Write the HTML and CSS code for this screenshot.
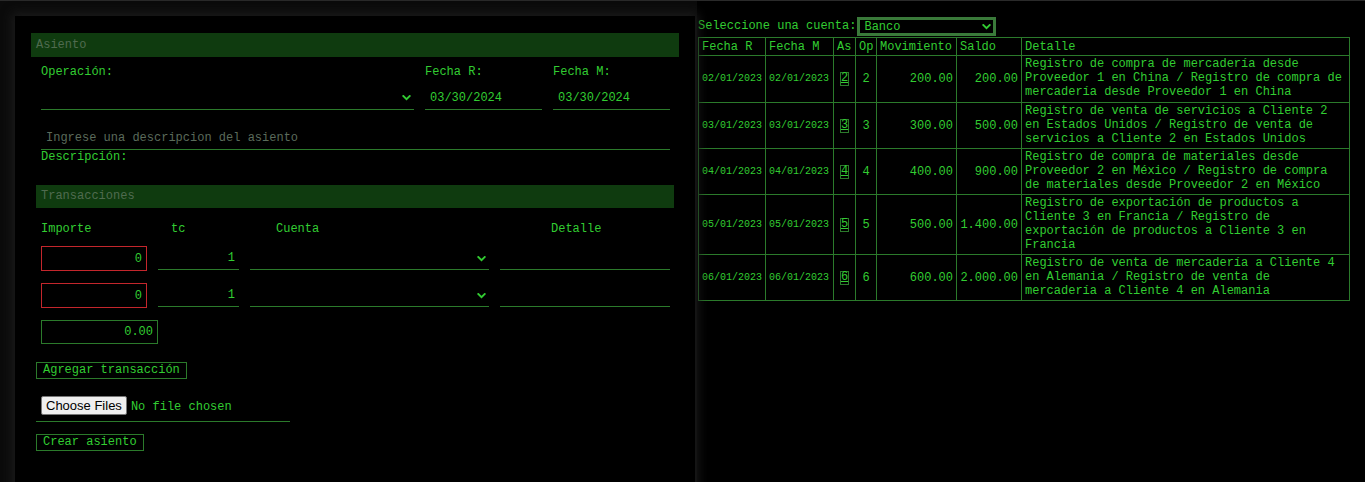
FILE: index.html
```html
<!DOCTYPE html>
<html lang="es">
<head>
<meta charset="utf-8">
<title>Asientos</title>
<link rel="stylesheet" href="styles.css">
</head>
<body>
<div class="app">
  <section class="panel">
    <div class="bar">Asiento</div>
    <div class="toprow">
      <div class="field f-op">
        <label class="lbl">Operación:</label>
        <div class="selwrap">
          <select class="line-select"><option></option></select>
          <svg class="chev" viewBox="0 0 10 7" width="9" height="6"><path d="M1.2 1.2 L5 5 L8.8 1.2" fill="none" stroke="#32cd32" stroke-width="2.2" stroke-linecap="square"/></svg>
        </div>
      </div>
      <div class="field f-date">
        <label class="lbl">Fecha R:</label>
        <input class="line-input" type="text" value="03/30/2024">
      </div>
      <div class="field f-date">
        <label class="lbl">Fecha M:</label>
        <input class="line-input" type="text" value="03/30/2024">
      </div>
    </div>
    <div class="desc">
      <input class="line-input desc-input" type="text" placeholder="Ingrese una descripcion del asiento">
      <label class="lbl">Descripción:</label>
    </div>

    <div class="bar bar2">Transacciones</div>
    <div class="trow thead">
      <div class="c-imp">Importe</div>
      <div class="c-tc h-tc">tc</div>
      <div class="c-cta h-cta">Cuenta</div>
      <div class="c-det h-det">Detalle</div>
    </div>
    <div class="trow r1">
      <input class="c-imp box-input red" type="text" value="0">
      <input class="c-tc line-input num" type="text" value="1">
      <div class="c-cta selwrap">
        <select class="line-select"><option></option></select>
        <svg class="chev" viewBox="0 0 10 7" width="9" height="6"><path d="M1.2 1.2 L5 5 L8.8 1.2" fill="none" stroke="#32cd32" stroke-width="2.2" stroke-linecap="square"/></svg>
      </div>
      <input class="c-det line-input" type="text">
    </div>
    <div class="trow r2">
      <input class="c-imp box-input red" type="text" value="0">
      <input class="c-tc line-input num" type="text" value="1">
      <div class="c-cta selwrap">
        <select class="line-select"><option></option></select>
        <svg class="chev" viewBox="0 0 10 7" width="9" height="6"><path d="M1.2 1.2 L5 5 L8.8 1.2" fill="none" stroke="#32cd32" stroke-width="2.2" stroke-linecap="square"/></svg>
      </div>
      <input class="c-det line-input" type="text">
    </div>
    <div class="totrow">
      <input class="box-input total" type="text" value="0.00">
    </div>
    <button class="gbtn add">Agregar transacción</button>
    <div class="filewrap">
      <input class="file" type="file" multiple>
    </div>
    <button class="gbtn create">Crear asiento</button>
  </section>

  <section class="right">
    <div class="selrow">
      <span class="sel-lbl">Seleccione una cuenta:</span>
      <div class="selwrap bancowrap">
        <select class="banco"><option>Banco</option></select>
        <svg class="chev chev-b" viewBox="0 0 10 7" width="9" height="6"><path d="M1.2 1.2 L5 5 L8.8 1.2" fill="none" stroke="#32cd32" stroke-width="2.2" stroke-linecap="square"/></svg>
      </div>
    </div>
    <table class="ledger">
      <colgroup>
        <col class="w-fr"><col class="w-fm"><col class="w-as"><col class="w-op"><col class="w-mov"><col class="w-sal"><col class="w-det">
      </colgroup>
      <thead>
        <tr><th>Fecha R</th><th>Fecha M</th><th>As</th><th>Op</th><th>Movimiento</th><th>Saldo</th><th>Detalle</th></tr>
      </thead>
      <tbody>
        <tr>
          <td class="date">02/01/2023</td><td class="date">02/01/2023</td>
          <td class="as"><span class="aslink">2</span></td><td class="op">2</td>
          <td class="num">200.00</td><td class="num">200.00</td>
          <td class="det first">Registro de compra de mercadería desde Proveedor 1 en China / Registro de compra de mercadería desde Proveedor 1 en China</td>
        </tr>
        <tr>
          <td class="date">03/01/2023</td><td class="date">03/01/2023</td>
          <td class="as"><span class="aslink">3</span></td><td class="op">3</td>
          <td class="num">300.00</td><td class="num">500.00</td>
          <td class="det">Registro de venta de servicios a Cliente 2 en Estados Unidos / Registro de venta de servicios a Cliente 2 en Estados Unidos</td>
        </tr>
        <tr>
          <td class="date">04/01/2023</td><td class="date">04/01/2023</td>
          <td class="as"><span class="aslink">4</span></td><td class="op">4</td>
          <td class="num">400.00</td><td class="num">900.00</td>
          <td class="det">Registro de compra de materiales desde Proveedor 2 en México / Registro de compra de materiales desde Proveedor 2 en México</td>
        </tr>
        <tr>
          <td class="date">05/01/2023</td><td class="date">05/01/2023</td>
          <td class="as"><span class="aslink">5</span></td><td class="op">5</td>
          <td class="num">500.00</td><td class="num">1.400.00</td>
          <td class="det">Registro de exportación de productos a Cliente 3 en Francia / Registro de exportación de productos a Cliente 3 en Francia</td>
        </tr>
        <tr>
          <td class="date">06/01/2023</td><td class="date">06/01/2023</td>
          <td class="as"><span class="aslink">6</span></td><td class="op">6</td>
          <td class="num">600.00</td><td class="num">2.000.00</td>
          <td class="det">Registro de venta de mercadería a Cliente 4 en Alemania / Registro de venta de mercadería a Cliente 4 en Alemania</td>
        </tr>
      </tbody>
    </table>
  </section>
</div>
</body>
</html>
```

FILE: styles.css
```css
* { box-sizing: border-box; }

html, body {
  margin: 0;
  padding: 0;
  height: 100%;
  background: #0b0b0b;
  overflow: hidden;
}

body {
  font-family: "Liberation Mono", "DejaVu Sans Mono", monospace;
  font-size: 12px;
  color: #32cd32;
}

.app {
  display: flex;
  align-items: flex-start;
  height: 482px;
  border-top: 1px solid #2a2a2a;
}

.panel {
  position: relative;
  z-index: 1;
  width: 680px;
  height: 482px;
  margin: 15px 0 0 15px;
  padding: 17px 16px 0 16px;
  background: #000;
  box-shadow: 0 0 10px 3px #1b1b1b;
}

.bar {
  height: 24px;
  line-height: 24px;
  padding-left: 5px;
  background: #0f3b0f;
  color: #4f6b4f;
  font-size: 12px;
}

.bar2 {
  margin: 21px 5px 0 5px;
  height: 23px;
  line-height: 23px;
}

.lbl {
  display: block;
  line-height: 14px;
  color: #32cd32;
}

.toprow {
  display: flex;
  gap: 11px;
  padding-left: 10px;
}

.field .lbl { margin-top: 8px; margin-bottom: 7px; }

.f-op { width: 373px; }
.f-date { width: 117px; }

.line-input {
  display: block;
  width: 100%;
  height: 24px;
  padding: 0 5px;
  margin: 0;
  background: transparent;
  border: none;
  border-bottom: 1px solid #2b7a2b;
  border-radius: 0;
  color: #32cd32;
  font-family: inherit;
  font-size: 12px;
  outline: none;
}

.line-input::placeholder { color: #5b6b5b; }

.line-input.num { text-align: right; padding-right: 4px; }

.selwrap { position: relative; }

.line-select {
  display: block;
  width: 100%;
  height: 24px;
  margin: 0;
  padding: 0 5px;
  background: transparent;
  border: none;
  border-bottom: 1px solid #2b7a2b;
  border-radius: 0;
  color: #32cd32;
  font-family: inherit;
  font-size: 12px;
  appearance: none;
  -webkit-appearance: none;
  outline: none;
}

.chev {
  position: absolute;
  right: 3px;
  top: 9px;
  pointer-events: none;
}

.desc {
  margin-top: 16px;
  padding-left: 10px;
}

.desc-input { width: 629px; }

.trow {
  display: flex;
  gap: 11px;
  padding-left: 10px;
}

.thead {
  margin-top: 14px;
  line-height: 14px;
}

.r1 { margin-top: 10px; }
.r2 { margin-top: 12px; }

.c-imp { width: 106px; }
.c-tc { width: 81px; }
.c-cta { width: 239px; }
.c-det { width: 170px; }

.h-tc { padding-left: 13px; }
.h-cta { padding-left: 26px; }
.h-det { padding-left: 51px; }

.trow .chev { top: 10px; right: 3px; }

.box-input {
  display: block;
  height: 25px;
  margin: 0;
  padding: 0 4px;
  background: transparent;
  border: 1px solid #2b7a2b;
  border-radius: 0;
  color: #32cd32;
  font-family: inherit;
  font-size: 12px;
  text-align: right;
  outline: none;
}

.box-input.red { border-color: #c4262c; }

.totrow {
  padding-left: 10px;
  margin-top: 12px;
}

.total { width: 117px; height: 24px; }

.gbtn {
  display: block;
  margin: 0 0 0 5px;
  padding: 0 6px;
  height: 17px;
  line-height: 15px;
  background: #000;
  border: 1px solid #2b7a2b;
  border-radius: 0;
  color: #32cd32;
  font-family: inherit;
  font-size: 12px;
}

.add { margin-top: 18px; }

.filewrap {
  width: 254px;
  margin: 17px 0 0 5px;
  padding: 0 0 6px 5px;
  border-bottom: 1px solid #2b7a2b;
}

.file {
  display: block;
  color: #32cd32;
  font-family: inherit;
  font-size: 12px;
  height: 19px;
}

.file::file-selector-button {
  font-family: "Liberation Sans", Arial, sans-serif;
  font-size: 13px;
  height: 19px;
  padding: 0 4px;
  margin: 0 4px 0 0;
  background: #efefef;
  color: #000;
  border: 1px solid #767676;
  border-radius: 2px;
}

.create { margin-top: 12px; }

.right {
  flex: 1;
  height: 482px;
  margin-left: 2px;
  padding: 16px 0 0 1px;
  background: #000;
}

.selrow {
  display: flex;
  align-items: center;
  height: 19px;
}

.sel-lbl { line-height: 19px; }

.bancowrap { width: 139px; margin-left: 1px; }

.banco {
  display: block;
  width: 139px;
  height: 19px;
  margin: 0;
  padding: 0 4px;
  background: #000;
  border: 3px solid #3a7a3a;
  border-radius: 0;
  color: #32cd32;
  font-family: "Liberation Mono", monospace;
  font-size: 12px;
  appearance: none;
  -webkit-appearance: none;
  outline: none;
}

.chev-b { right: 5px; top: 7px; }

.ledger {
  margin-top: 1px;
  width: 651px;
  table-layout: fixed;
  border-collapse: collapse;
  color: #32cd32;
  font-size: 12px;
}

.w-fr { width: 67px; }
.w-fm { width: 68px; }
.w-as { width: 22px; }
.w-op { width: 21px; }
.w-mov { width: 80px; }
.w-sal { width: 65px; }
.w-det { width: 328px; }

.ledger th, .ledger td {
  border: 1px solid #2b7a2b;
  padding: 0 3px;
}

.ledger th {
  height: 18px;
  font-weight: normal;
  text-align: left;
  line-height: 16px;
  white-space: nowrap;
  overflow: hidden;
  padding: 0 2px 0 3px;
}

.ledger td { vertical-align: middle; line-height: 12px; }

.ledger td.date {
  font-size: 10px;
  padding: 0 2px 0 3px;
  white-space: nowrap;
}

.ledger td.as, .ledger td.op {
  text-align: center;
  padding: 0;
}

.aslink {
  display: inline-block;
  vertical-align: middle;
  border: 1px solid #2b7a2b;
  line-height: 11px;
  height: 14px;
  padding: 0;
  text-decoration: underline;
}

.ledger td.num {
  text-align: right;
  white-space: nowrap;
  padding: 0 3px 0 0;
}

.ledger td.det {
  line-height: 14px;
  padding: 1px 2px 2px 3px;
}

.ledger td.det.first { padding-bottom: 3px; }
```
